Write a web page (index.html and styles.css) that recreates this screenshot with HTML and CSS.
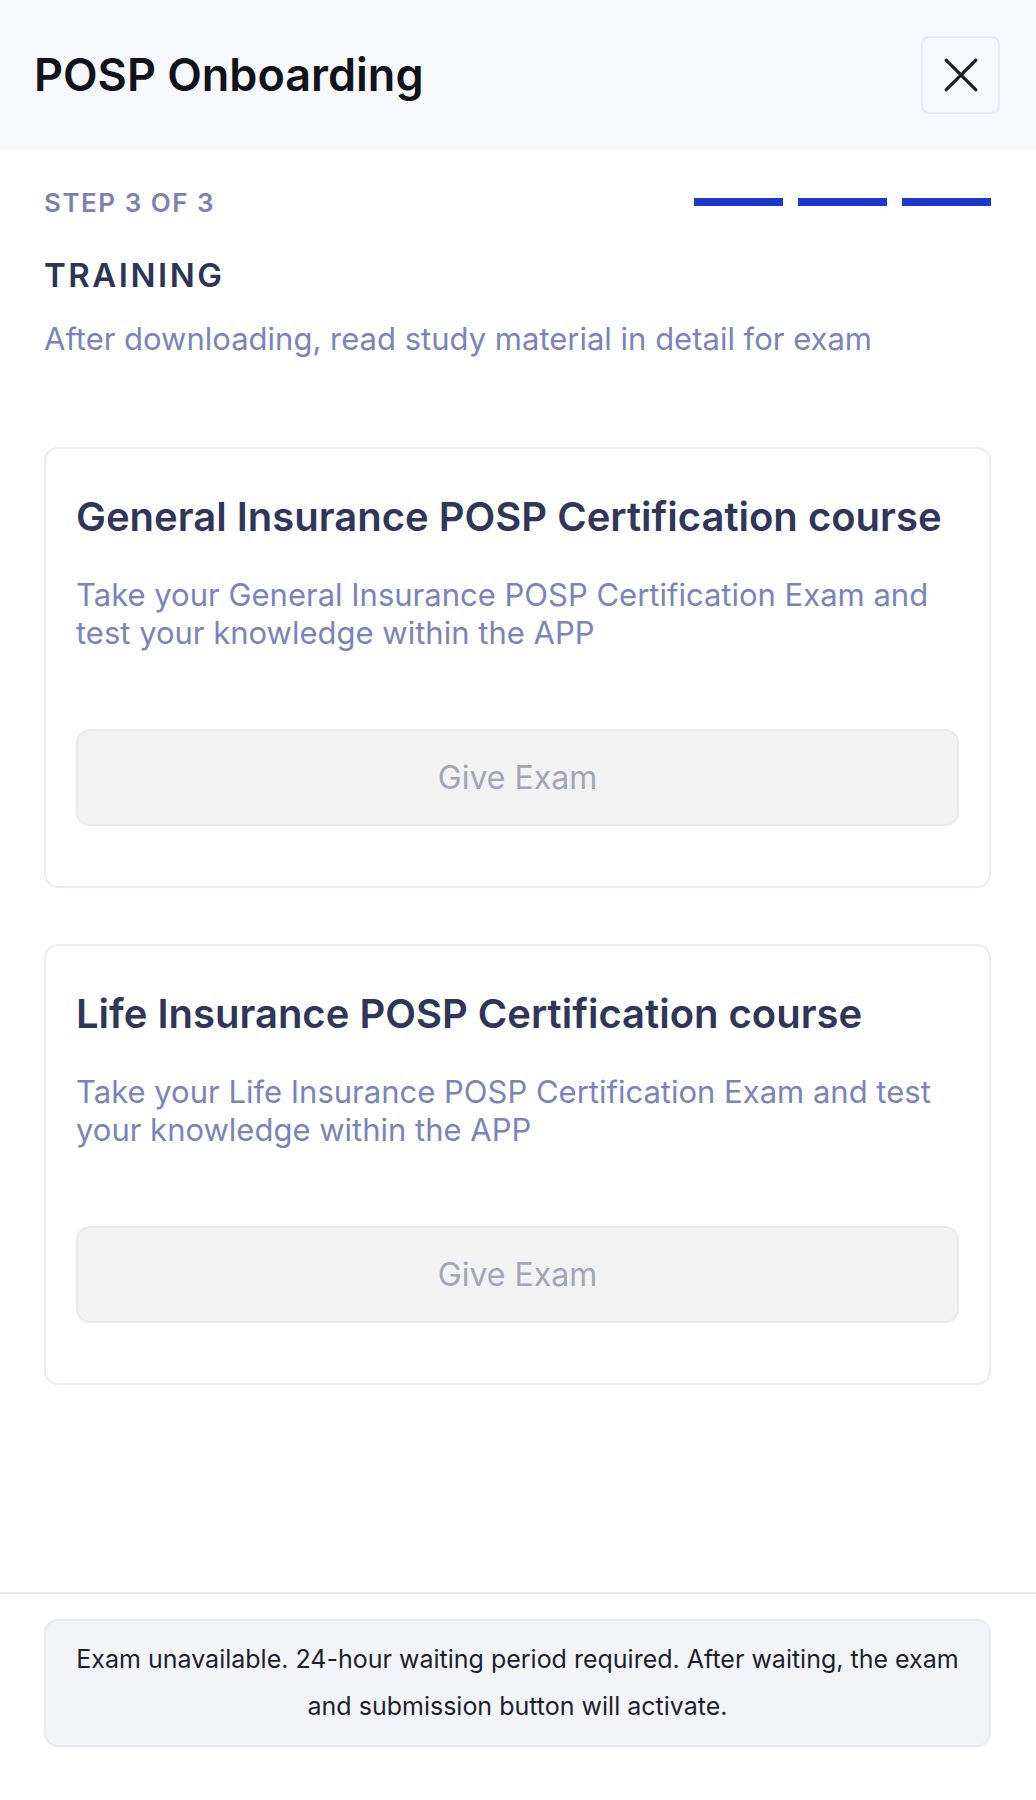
FILE: index.html
```html
<!DOCTYPE html>
<html lang="en">
<head>
<meta charset="utf-8">
<title>POSP Onboarding</title>
<link rel="stylesheet" href="styles.css">
</head>
<body>
<div class="page">
  <header class="topbar">
    <h1 class="topbar-title">POSP Onboarding</h1>
    <button class="close-btn" aria-label="Close">
      <svg width="42" height="42" viewBox="0 0 24 24" fill="none" stroke="#1b1d2b" stroke-width="1.8" stroke-linecap="round"><path d="M3.5 3.5 L20.5 20.5 M20.5 3.5 L3.5 20.5"/></svg>
    </button>
  </header>

  <main class="content">
    <div class="step-row">
      <span class="step-label">STEP 3 OF 3</span>
      <div class="progress">
        <span class="bar"></span><span class="bar"></span><span class="bar"></span>
      </div>
    </div>
    <h2 class="section-title">TRAINING</h2>
    <p class="section-sub">After downloading, read study material in detail for exam</p>

    <div class="cards">
      <section class="card">
        <h3 class="card-title">General Insurance POSP Certification course</h3>
        <p class="card-desc">Take your General Insurance POSP Certification Exam and test your knowledge within the APP</p>
        <button class="exam-btn" disabled>Give Exam</button>
      </section>
      <section class="card">
        <h3 class="card-title">Life Insurance POSP Certification course</h3>
        <p class="card-desc">Take your Life Insurance POSP Certification Exam and test your knowledge within the APP</p>
        <button class="exam-btn" disabled>Give Exam</button>
      </section>
    </div>
  </main>

  <footer class="footer">
    <div class="notice">Exam unavailable. 24-hour waiting period required. After waiting, the exam and submission button will activate.</div>
  </footer>
</div>
</body>
</html>
```

FILE: styles.css
```css
* { box-sizing: border-box; }
html, body { margin: 0; padding: 0; }
body {
  font-family: "Inter", "Noto Sans", sans-serif;
  background: #ffffff;
  color: #1d1f2e;
}
.page {
  min-height: 100vh;
  display: flex;
  flex-direction: column;
}
.topbar {
  height: 149px;
  background: #f7f8fb;
  display: flex;
  align-items: center;
  justify-content: space-between;
  padding: 0 36px 0 34px;
}
.topbar-title {
  margin: 0;
  font-size: 45px;
  line-height: 54px;
  font-weight: 600;
  color: #11121a;
}
.close-btn {
  width: 79px;
  height: 78px;
  border: 2px solid #e9eaf1;
  border-radius: 8px;
  background: #f7f8fb;
  display: flex;
  align-items: center;
  justify-content: center;
  padding: 0;
}
.content {
  padding: 0 45px 0 44px;
}
.step-row {
  margin-top: 38px;
  display: flex;
  align-items: center;
  justify-content: space-between;
  height: 30px;
}
.step-label {
  font-size: 26px;
  font-weight: 600;
  color: #7a83b0;
  letter-spacing: 1.5px;
}
.progress {
  display: flex;
  gap: 15px;
}
.bar {
  width: 89px;
  height: 8px;
  background: #1a39cf;
}
.section-title {
  margin: 38px 0 0;
  font-size: 33px;
  line-height: 40px;
  font-weight: 600;
  color: #2d3456;
  letter-spacing: 2.5px;
}
.section-sub {
  margin: 25px 0 0;
  font-size: 31px;
  line-height: 38px;
  color: #7b84b8;
}
.cards {
  margin-top: 89px;
  display: flex;
  flex-direction: column;
  gap: 56px;
}
.card {
  border: 2px solid #ebecf3;
  border-radius: 14px;
  padding: 46px 30px 60px;
}
.card-title {
  margin: 0;
  font-size: 40px;
  line-height: 44px;
  font-weight: 600;
  color: #2f365a;
}
.card-desc {
  margin: 37px 0 0;
  font-size: 31px;
  line-height: 38px;
  color: #7b84b8;
}
.exam-btn {
  margin-top: 77px;
  width: 100%;
  height: 97px;
  border: 2px solid #e9eaf0;
  border-radius: 14px;
  background: #f2f2f3;
  color: #a3a5b4;
  font-family: inherit;
  font-size: 32px;
  padding: 0;
}
.footer {
  margin-top: auto;
  border-top: 2px solid #ebecf1;
  padding: 25px 45px 53px 44px;
}
.notice {
  background: #f3f4f8;
  border: 2px solid #e8e9f1;
  border-radius: 14px;
  padding: 15px 20px;
  text-align: center;
  font-size: 25px;
  line-height: 47px;
  color: #1d1f2e;
}
```
